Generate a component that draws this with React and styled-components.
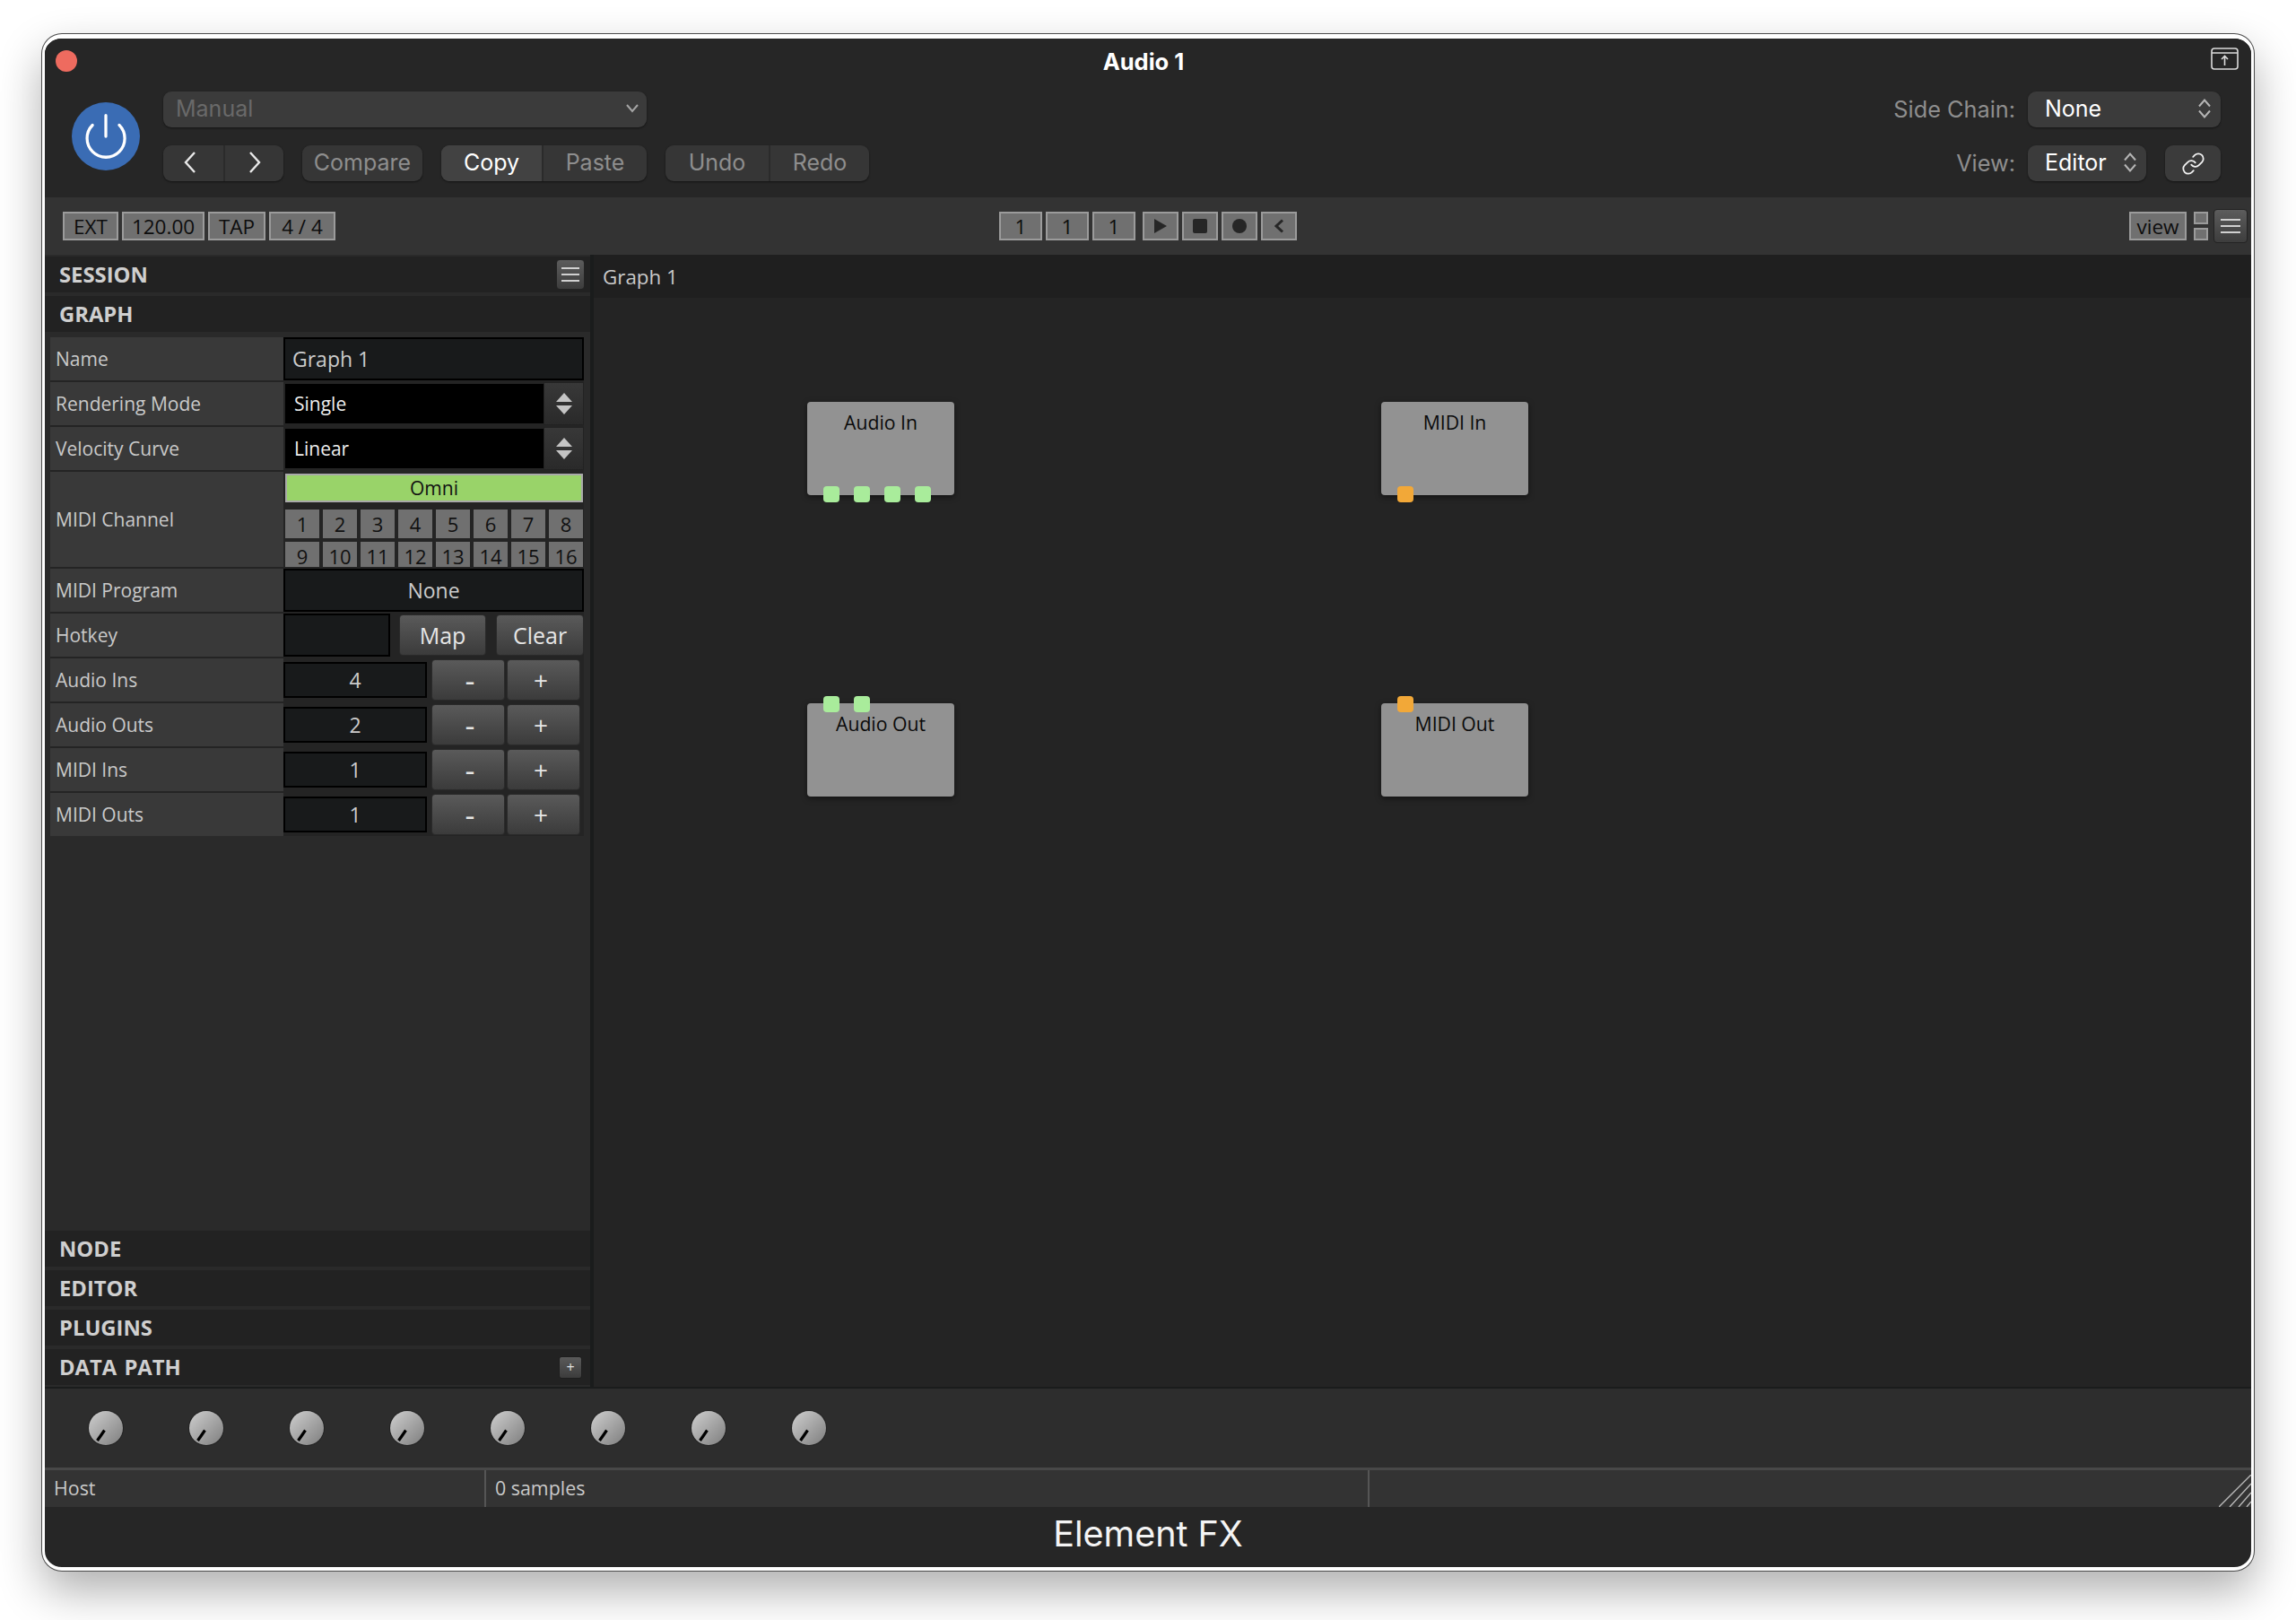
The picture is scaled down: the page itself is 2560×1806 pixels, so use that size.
import React from "react";
import styled, { createGlobalStyle } from "styled-components";
import { Link, Power } from "lucide-react";

const GlobalStyle = createGlobalStyle`
    html, body {
        margin: 0;
        background: #fff;
    }
    * {
        box-sizing: border-box;
    }
`;

const Page = styled.div`
    width: 2560px;
    height: 1806px;
    padding: 38px 0 0 47px;
    overflow: hidden;
    background: #fff;
    font-family: "Open Sans", "Liberation Sans", sans-serif;
`;

const Window = styled.div`
    width: 2466px;
    height: 1713px;
    display: flex;
    flex-direction: column;
    overflow: hidden;
    background: #262626;
    border: solid #fff;
    border-width: 5px 3px 4px;
    border-radius: 22px;
    box-shadow: 0 0 0 1px #4a4a4a, 0 22px 50px rgba(0, 0, 0, 0.32);
`;

/* host title bar and plugin header */
const Header = styled.div`
    height: 177px;
    flex: none;
    background: #262626;
`;

const TitleBar = styled.div`
    height: 59px;
    display: grid;
    grid-template-columns: 1fr auto 1fr;
    align-items: start;
    padding: 13px 14px 0 12px;
`;

const CloseDot = styled.div`
    width: 24px;
    height: 24px;
    border-radius: 50%;
    background: #ee6b5f;
`;

const Title = styled.div`
    margin: 1px 8px 0 0;
    font-family: Inter, "Liberation Sans", sans-serif;
    font-size: 25.5px;
    font-weight: 700;
    line-height: 24px;
    color: #fff;
`;

const PopoutIcon = styled.svg`
    justify-self: end;
    width: 31px;
    height: 25px;
    margin-top: -3px;
`;

const Controls = styled.div`
    display: flex;
    align-items: center;
    padding: 0 34px 0 30px;
`;

const PowerButton = styled.div`
    width: 76px;
    height: 76px;
    flex: none;
    display: flex;
    align-items: center;
    justify-content: center;
    border-radius: 50%;
    background: #3a6cb4;
    color: #fff;
`;

const Column = styled.div`
    display: flex;
    flex-direction: column;
    gap: 20px;
    margin-left: ${(props) => props.$left || "auto"};
    align-items: ${(props) => props.$align || "flex-start"};
`;

const HeaderRow = styled.div`
    display: flex;
    align-items: center;
    gap: 21px;
`;

const Preset = styled.div`
    width: 539px;
    height: 40px;
    display: flex;
    align-items: center;
    justify-content: space-between;
    padding: 0 9px 2px 14px;
    background: #3b3b3b;
    border-radius: 9px;
    box-shadow: 0 1px 2px rgba(0, 0, 0, 0.5);
    font-family: Inter, "Liberation Sans", sans-serif;
    font-size: 25px;
    color: #696969;
`;

const Group = styled.div`
    height: 40px;
    display: flex;
    border-radius: 9px;
    overflow: hidden;
    background: #363636;
    box-shadow: 0 1px 2px rgba(0, 0, 0, 0.5);
`;

const GroupItem = styled.div`
    width: ${(props) => props.$width}px;
    display: flex;
    align-items: center;
    justify-content: center;
    padding: 0 ${(props) => props.$nudge || 0}px 2px 0;
    font-family: Inter, "Liberation Sans", sans-serif;
    font-size: 25px;
    color: ${(props) => (props.$active ? "#fff" : "#8e8e8e")};
    background: ${(props) => (props.$active ? "#424242" : "transparent")};
    & + & {
        border-left: 2px solid #2b2b2b;
    }
`;

const HostLabel = styled.div`
    margin-right: -7px;
    padding-bottom: 2px;
    font-family: Inter, "Liberation Sans", sans-serif;
    font-size: 25.3px;
    color: #8e8e8e;
`;

const HostSelect = styled.div`
    width: ${(props) => props.$width}px;
    height: 40px;
    display: flex;
    align-items: center;
    justify-content: space-between;
    padding: 0 10px 2px 19px;
    background: #3b3b3b;
    border-radius: 9px;
    box-shadow: 0 1px 2px rgba(0, 0, 0, 0.5);
    font-family: Inter, "Liberation Sans", sans-serif;
    font-size: 25px;
    color: #fff;
`;

const LinkButton = styled.div`
    width: 62px;
    height: 40px;
    display: flex;
    align-items: center;
    justify-content: center;
    background: #3b3b3b;
    border-radius: 9px;
    box-shadow: 0 1px 2px rgba(0, 0, 0, 0.5);
    color: #f2f2f2;
`;

/* transport strip */
const Transport = styled.div`
    height: 64px;
    flex: none;
    display: grid;
    grid-template-columns: 1fr auto 1fr;
    align-items: center;
    padding: 0 4px;
    background: #333;
`;

const ButtonRow = styled.div`
    display: flex;
    align-items: center;
    gap: ${(props) => props.$gap ?? 4}px;
    margin-left: ${(props) => props.$left || 0}px;
    justify-self: ${(props) => props.$justify || "start"};
`;

const Flat = styled.div`
    width: ${(props) => props.$width}px;
    height: 32px;
    display: flex;
    align-items: center;
    justify-content: center;
    margin-left: ${(props) => props.$left || 0}px;
    background: #707070;
    border: 2px solid #9b9b9b;
    font-size: 22.5px;
    color: #0d0d0d;
`;

const MiniStack = styled.div`
    display: flex;
    flex-direction: column;
    gap: 4px;
    margin: 0 6px 0 8px;
`;

const Mini = styled.div`
    width: 16px;
    height: 14px;
    background: #707070;
    border: 2px solid #9b9b9b;
`;

const MenuButton = styled.div`
    width: ${(props) => props.$size}px;
    height: ${(props) => props.$height}px;
    display: flex;
    flex-direction: column;
    align-items: center;
    justify-content: center;
    gap: 5px;
    background: linear-gradient(#5c5c5c, #3d3d3d);
    border: 1px solid #232323;
    border-radius: 4px;
`;

const MenuLine = styled.div`
    width: ${(props) => props.$width}px;
    height: 2px;
    background: #d0d0d0;
`;

/* main area */
const Main = styled.div`
    flex: 1;
    min-height: 0;
    display: flex;
    border-bottom: 2px solid #1a1c1c;
`;

const Sidebar = styled.div`
    width: 612px;
    flex: none;
    display: flex;
    flex-direction: column;
    padding: 2px 4px 2px 0;
    background: linear-gradient(90deg, #2a2a2a 608px, #1a1c1c 608px);
    font-kerning: none;
`;

const SectionHeader = styled.div`
    height: 40px;
    flex: none;
    display: flex;
    align-items: center;
    justify-content: space-between;
    padding: 0 6px 0 16px;
    margin-bottom: ${(props) => (props.$last ? 0 : 4)}px;
    background: #222;
    font-size: 23.8px;
    font-weight: 700;
    word-spacing: 2px;
    color: #cfcfcf;
`;

const AddButton = styled.div`
    width: 26px;
    height: 25px;
    display: flex;
    align-items: center;
    justify-content: center;
    margin-right: 3px;
    background: linear-gradient(#5a5a5a, #3c3c3c);
    border: 1px solid #1e1e1e;
    border-radius: 3px;
    font-size: 16px;
    font-weight: 400;
    color: #e0e0e0;
`;

const Rows = styled.div`
    display: flex;
    flex-direction: column;
    gap: 2px;
    margin: 6px 7px 0 6px;
    background: #242424;
`;

const Spacer = styled.div`
    flex: 1;
`;

const Row = styled.div`
    height: ${(props) => props.$height || 48}px;
    display: flex;
`;

const RowLabel = styled.div`
    width: 260px;
    flex: none;
    display: flex;
    align-items: center;
    padding-left: 6px;
    background: #393939;
    font-size: 21px;
    color: #c9c9c9;
`;

const RowValue = styled.div`
    flex: 1;
    min-width: 0;
    display: flex;
    align-items: center;
`;

const Field = styled.div`
    width: ${(props) => (props.$width ? `${props.$width}px` : "100%")};
    height: ${(props) => props.$height || 48}px;
    flex: none;
    display: flex;
    align-items: center;
    justify-content: ${(props) => (props.$center ? "center" : "flex-start")};
    padding-left: ${(props) => (props.$center ? 0 : 8)}px;
    background: #181a1b;
    border: 2px solid #000;
    font-size: 23px;
    color: #cbcbcb;
`;

const ComboText = styled.div`
    flex: 1;
    height: 44px;
    display: flex;
    align-items: center;
    margin-left: 2px;
    padding-left: 10px;
    background: #000;
    font-size: 21px;
    color: #eee;
`;

const ComboArrows = styled.div`
    width: 45px;
    height: 48px;
    display: flex;
    align-items: center;
    justify-content: center;
    background: linear-gradient(#383838, #2a2a2a);
    border: 1px solid #222;
`;

const ChannelPanel = styled.div`
    display: flex;
    flex-direction: column;
    padding: 2px 0 0 2px;
`;

const OmniButton = styled.div`
    width: 332px;
    height: 32px;
    display: flex;
    align-items: center;
    justify-content: center;
    background: #99d369;
    border: 2px solid #a9a9a9;
    font-size: 21px;
    color: #111;
`;

const ChannelGrid = styled.div`
    display: grid;
    grid-template-columns: repeat(8, 38px);
    grid-template-rows: 32px 28px;
    gap: 4px;
    margin-top: 8px;
`;

const Channel = styled.div`
    background: #707070;
    text-align: center;
    font-size: 22px;
    line-height: 32px;
    color: #111;
    overflow: hidden;
`;

const BevelButton = styled.div`
    width: ${(props) => props.$width}px;
    height: 46px;
    flex: none;
    display: flex;
    align-items: center;
    justify-content: center;
    margin-left: ${(props) => props.$left || 0}px;
    padding: 0 ${(props) => props.$padRight || 0}px 0 ${(props) => props.$padLeft || 0}px;
    background: linear-gradient(#5a5a5a, #3b3b3b);
    border: 1px solid #2a2a2a;
    border-radius: 4px;
    font-size: ${(props) => props.$font || 25}px;
    font-weight: 500;
    color: #e6e6e6;
`;

/* graph editor */
const GraphPane = styled.div`
    flex: 1;
    display: flex;
    flex-direction: column;
`;

const GraphTitle = styled.div`
    height: 48px;
    flex: none;
    display: flex;
    align-items: center;
    padding-left: 10px;
    background: #1f1f1f;
    font-size: 22.4px;
    color: #c9c9c9;
`;

const Canvas = styled.div`
    flex: 1;
    position: relative;
    background: #242424;
`;

const Node = styled.div`
    position: absolute;
    left: ${(props) => props.$x}px;
    top: ${(props) => props.$y}px;
    width: 164px;
    height: 104px;
    padding-top: 9px;
    background: #929292;
    border-radius: 4px;
    box-shadow: 0 2px 6px rgba(0, 0, 0, 0.5);
    text-align: center;
    font-size: 21.2px;
    line-height: 28px;
    color: #0a0a0a;
`;

const Port = styled.div`
    position: absolute;
    left: ${(props) => 18 + props.$index * 34}px;
    top: ${(props) => (props.$input ? -8 : 94)}px;
    width: 18px;
    height: 18px;
    border-radius: 4px;
    background: ${(props) => (props.$midi ? "#f2a838" : "#a9ec9b")};
`;

/* knobs + status */
const KnobBar = styled.div`
    height: 88px;
    flex: none;
    display: flex;
    align-items: center;
    gap: 74px;
    padding-left: 49px;
    background: #2d2d2d;
`;

const KnobBody = styled.div`
    width: 38px;
    height: 38px;
    flex: none;
    border-radius: 50%;
    background: linear-gradient(135deg, #cfcfcf, #7e7e7e);
    box-shadow: 0 0 0 1px #222;
`;

const KnobMark = styled.svg`
    display: block;
    width: 38px;
    height: 38px;
`;

const StatusBar = styled.div`
    height: 44px;
    flex: none;
    position: relative;
    display: flex;
    background: #333;
    border-top: 3px solid #484848;
`;

const StatusCell = styled.div`
    width: ${(props) => props.$width}px;
    display: flex;
    align-items: center;
    padding: 0 0 2px ${(props) => props.$pad}px;
    border-right: 2px solid #555;
    font-size: 21.4px;
    color: #c9c9c9;
`;

const ResizeHandle = styled.svg`
    position: absolute;
    right: 0;
    bottom: 0;
    width: 36px;
    height: 36px;
`;

const Footer = styled.div`
    height: 67px;
    flex: none;
    display: flex;
    align-items: center;
    justify-content: center;
    padding-bottom: 8px;
    font-family: Inter, "Liberation Sans", sans-serif;
    font-size: 39.5px;
    font-weight: 400;
    color: #f4f4f4;
`;

const Chevron = ({ dir }) => (
    <svg width="16" height="26" viewBox="0 0 16 26" fill="none" stroke="#e8e8e8" strokeWidth="2.4">
        <path d={dir === "left" ? "M13 2 3 13l10 11" : "M3 2l10 11L3 24"} />
    </svg>
);

const UpDown = () => (
    <svg width="16" height="24" viewBox="0 0 16 24" fill="none" stroke="#b5b5b5" strokeWidth="2">
        <path d="M2 9.500 8 2.500l6 7M2 14.500l6 7 6-7" />
    </svg>
);

const ComboGlyph = () => (
    <svg width="20" height="26" viewBox="0 0 20 26" fill="#c4c4c4">
        <path d="M10 1l9 10H1zM1 15h18l-9 10z" />
    </svg>
);

const channels = Array.from({ length: 16 }, (_, i) => i + 1);
const steppers = [
    { label: "Audio Ins", value: 4 },
    { label: "Audio Outs", value: 2 },
    { label: "MIDI Ins", value: 1 },
    { label: "MIDI Outs", value: 1 },
];
const nodes = [
    { name: "Audio In", x: 238, y: 116, ports: 4 },
    { name: "MIDI In", x: 878, y: 116, ports: 1, midi: true },
    { name: "Audio Out", x: 238, y: 452, ports: 2, input: true },
    { name: "MIDI Out", x: 878, y: 452, ports: 1, midi: true, input: true },
];

const App = () => (
    <Page>
        <GlobalStyle />
        <Window>
            <Header>
                <TitleBar>
                    <CloseDot />
                    <Title>Audio 1</Title>
                    <PopoutIcon viewBox="0 0 31 25" fill="none" stroke="#dcdcdc" strokeWidth="1.6">
                        <rect x="1" y="1" width="29" height="23" rx="3" />
                        <path d="M1 6h29M15.500 20v-10M12 13l3.500-3.500 3.500 3.500" />
                    </PopoutIcon>
                </TitleBar>
                <Controls>
                    <PowerButton>
                        <Power size={56} strokeWidth={1.4} />
                    </PowerButton>
                    <Column $left="26px">
                        <Preset>
                            Manual
                            <svg width="14" height="10" viewBox="0 0 14 10" fill="none" stroke="#a5a5a5" strokeWidth="2">
                                <path d="M1 1l6 7 6-7" />
                            </svg>
                        </Preset>
                        <HeaderRow>
                            <Group>
                                <GroupItem $width={67} $nudge={7}>
                                    <Chevron dir="left" />
                                </GroupItem>
                                <GroupItem $width={67}>
                                    <Chevron dir="right" />
                                </GroupItem>
                            </Group>
                            <Group>
                                <GroupItem $width={134}>Compare</GroupItem>
                            </Group>
                            <Group>
                                <GroupItem $width={112} $active>Copy</GroupItem>
                                <GroupItem $width={117}>Paste</GroupItem>
                            </Group>
                            <Group>
                                <GroupItem $width={115}>Undo</GroupItem>
                                <GroupItem $width={112}>Redo</GroupItem>
                            </Group>
                        </HeaderRow>
                    </Column>
                    <Column $align="flex-end">
                        <HeaderRow>
                            <HostLabel>Side Chain:</HostLabel>
                            <HostSelect $width={215}>
                                None
                                <UpDown />
                            </HostSelect>
                        </HeaderRow>
                        <HeaderRow>
                            <HostLabel>View:</HostLabel>
                            <HostSelect $width={132}>
                                Editor
                                <UpDown />
                            </HostSelect>
                            <LinkButton>
                                <Link size={27} strokeWidth={1.6} />
                            </LinkButton>
                        </HeaderRow>
                    </Column>
                </Controls>
            </Header>

            <Transport>
                <ButtonRow $left={16}>
                    <Flat $width={62}>EXT</Flat>
                    <Flat $width={92}>120.00</Flat>
                    <Flat $width={64}>TAP</Flat>
                    <Flat $width={74}>4 / 4</Flat>
                </ButtonRow>
                <ButtonRow>
                    <Flat $width={48}>1</Flat>
                    <Flat $width={48}>1</Flat>
                    <Flat $width={48}>1</Flat>
                    <Flat $width={40} $left={4}>
                        <svg width="14" height="16" viewBox="0 0 14 16" fill="#262626">
                            <path d="M0 0l14 8-14 8z" />
                        </svg>
                    </Flat>
                    <Flat $width={40}>
                        <svg width="16" height="16" viewBox="0 0 16 16" fill="#262626">
                            <rect width="16" height="16" rx="2" />
                        </svg>
                    </Flat>
                    <Flat $width={40}>
                        <svg width="16" height="16" viewBox="0 0 16 16" fill="#262626">
                            <circle cx="8" cy="8" r="8" />
                        </svg>
                    </Flat>
                    <Flat $width={40}>
                        <svg width="12" height="16" viewBox="0 0 12 16" fill="none" stroke="#262626" strokeWidth="3">
                            <path d="M10 1.500 3 8l7 6.500" />
                        </svg>
                    </Flat>
                </ButtonRow>
                <ButtonRow $gap={0} $justify="end">
                    <Flat $width={64}>view</Flat>
                    <MiniStack>
                        <Mini />
                        <Mini />
                    </MiniStack>
                    <MenuButton $size={38} $height={38}>
                        <MenuLine $width={22} />
                        <MenuLine $width={22} />
                        <MenuLine $width={22} />
                    </MenuButton>
                </ButtonRow>
            </Transport>

            <Main>
                <Sidebar>
                    <SectionHeader>
                        SESSION
                        <MenuButton $size={32} $height={34}>
                            <MenuLine $width={20} />
                            <MenuLine $width={20} />
                            <MenuLine $width={20} />
                        </MenuButton>
                    </SectionHeader>
                    <SectionHeader $last>GRAPH</SectionHeader>
                    <Rows>
                        <Row>
                            <RowLabel>Name</RowLabel>
                            <RowValue>
                                <Field>Graph 1</Field>
                            </RowValue>
                        </Row>
                        <Row>
                            <RowLabel>Rendering Mode</RowLabel>
                            <RowValue>
                                <ComboText>Single</ComboText>
                                <ComboArrows>
                                    <ComboGlyph />
                                </ComboArrows>
                            </RowValue>
                        </Row>
                        <Row>
                            <RowLabel>Velocity Curve</RowLabel>
                            <RowValue>
                                <ComboText>Linear</ComboText>
                                <ComboArrows>
                                    <ComboGlyph />
                                </ComboArrows>
                            </RowValue>
                        </Row>
                        <Row $height={106}>
                            <RowLabel>MIDI Channel</RowLabel>
                            <ChannelPanel>
                                <OmniButton>Omni</OmniButton>
                                <ChannelGrid>
                                    {channels.map((channel) => (
                                        <Channel key={channel}>{channel}</Channel>
                                    ))}
                                </ChannelGrid>
                            </ChannelPanel>
                        </Row>
                        <Row>
                            <RowLabel>MIDI Program</RowLabel>
                            <RowValue>
                                <Field $center>None</Field>
                            </RowValue>
                        </Row>
                        <Row>
                            <RowLabel>Hotkey</RowLabel>
                            <RowValue>
                                <Field $width={119} />
                                <BevelButton $width={97} $left={10}>Map</BevelButton>
                                <BevelButton $width={98} $left={11}>Clear</BevelButton>
                            </RowValue>
                        </Row>
                        {steppers.map((item) => (
                            <Row key={item.label}>
                                <RowLabel>{item.label}</RowLabel>
                                <RowValue>
                                    <Field $width={160} $height={40} $center>
                                        {item.value}
                                    </Field>
                                    <BevelButton $width={82} $left={5} $font={34} $padLeft={4}>-</BevelButton>
                                    <BevelButton $width={82} $left={2} $font={28} $padRight={6}>+</BevelButton>
                                </RowValue>
                            </Row>
                        ))}
                    </Rows>
                    <Spacer />
                    <SectionHeader>NODE</SectionHeader>
                    <SectionHeader>EDITOR</SectionHeader>
                    <SectionHeader>PLUGINS</SectionHeader>
                    <SectionHeader $last>
                        DATA PATH
                        <AddButton>+</AddButton>
                    </SectionHeader>
                </Sidebar>
                <GraphPane>
                    <GraphTitle>Graph 1</GraphTitle>
                    <Canvas>
                        {nodes.map((node) => (
                            <Node key={node.name} $x={node.x} $y={node.y}>
                                {node.name}
                                {Array.from({ length: node.ports }, (_, i) => (
                                    <Port key={i} $index={i} $input={node.input} $midi={node.midi} />
                                ))}
                            </Node>
                        ))}
                    </Canvas>
                </GraphPane>
            </Main>

            <KnobBar>
                {Array.from({ length: 8 }, (_, i) => (
                    <KnobBody key={i}>
                        <KnobMark viewBox="0 0 38 38" stroke="#000" strokeWidth="3.200">
                            <path d="M17.500 21.500 9.500 33" />
                        </KnobMark>
                    </KnobBody>
                ))}
            </KnobBar>

            <StatusBar>
                <StatusCell $width={492} $pad={10}>Host</StatusCell>
                <StatusCell $width={985} $pad={10}>0 samples</StatusCell>
                <ResizeHandle viewBox="0 0 36 36" stroke="#b8b8b8" strokeWidth="1.400">
                    <path d="M0 36 36 0M12 36 36 10M22 36 36 20M31 36 36 30" />
                </ResizeHandle>
            </StatusBar>

            <Footer>Element FX</Footer>
        </Window>
    </Page>
);

export default App;
